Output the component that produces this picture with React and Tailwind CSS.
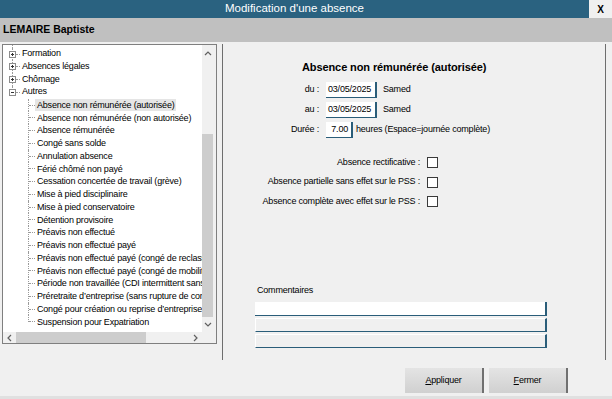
import React from 'react'

const TOP_ITEMS = [
  { label: 'Formation', open: false },
  { label: 'Absences légales', open: false },
  { label: 'Chômage', open: false },
  { label: 'Autres', open: true },
]

const CHILDREN = [
  'Absence non rémunérée (autorisée)',
  'Absence non rémunérée (non autorisée)',
  'Absence rémunérée',
  'Congé sans solde',
  'Annulation absence',
  'Férié chômé non payé',
  'Cessation concertée de travail (grève)',
  'Mise à pied disciplinaire',
  'Mise à pied conservatoire',
  'Détention provisoire',
  'Préavis non effectué',
  'Préavis non effectué payé',
  'Préavis non effectué payé (congé de reclassement)',
  'Préavis non effectué payé (congé de mobilité)',
  'Période non travaillée (CDI intermittent sans période)',
  'Préretraite d’entreprise (sans rupture de contrat)',
  'Congé pour création ou reprise d’entreprise',
  'Suspension pour Expatriation',
]

function ExpandBox({ open }) {
  return (
    <svg width="7" height="7" className="absolute left-[6px] top-[3px]">
      <rect x="0.5" y="0.5" width="6" height="6" fill="#fff" stroke="#8c8c8c" />
      <line x1="2" y1="3.5" x2="5" y2="3.5" stroke="#333" />
      {!open && <line x1="3.5" y1="2" x2="3.5" y2="5" stroke="#333" />}
    </svg>
  )
}

function TopRow({ item, last }) {
  return (
    <div className="relative h-[12.75px] flex items-center pl-[19px] whitespace-nowrap">
      <div className={`absolute left-[9px] top-0 border-l border-dotted border-[#9a9a9a] ${last ? 'h-1/2' : 'h-full'}`} />
      <div className="absolute left-[13px] top-[6px] w-[4px] border-t border-dotted border-[#9a9a9a]" />
      <ExpandBox open={item.open} />
      <span>{item.label}</span>
    </div>
  )
}

function ChildRow({ label, last, selected }) {
  return (
    <div className="relative h-[12.75px] flex items-center pl-[32px] whitespace-nowrap">
      <div className={`absolute left-[25px] top-0 border-l border-dotted border-[#9a9a9a] ${last ? 'h-1/2' : 'h-full'}`} />
      <div className="absolute left-[26px] top-[6px] w-[6px] border-t border-dotted border-[#9a9a9a]" />
      <span className={`px-[2px] leading-[12px] ${selected ? 'bg-[#e5e5e5]' : ''}`}>{label}</span>
    </div>
  )
}

function Chevron({ dir }) {
  const pts = {
    up: '1,5 4,2 7,5',
    down: '1,2 4,5 7,2',
    left: '5,1 2,4 5,7',
    right: '2,1 5,4 2,7',
  }
  return (
    <svg width="8" height="8">
      <polyline points={pts[dir]} fill="none" stroke="#606060" strokeWidth="1.2" />
    </svg>
  )
}

function TreePanel() {
  return (
    <div className="w-[215px] h-[300px] border border-[#7f7f7f] bg-white flex flex-col shrink-0">
      <div className="flex-1 flex min-h-0">
        <div className="flex-1 overflow-hidden pt-[2.6px] relative">
          <div className="absolute left-[9px] top-0 h-[3px] border-l border-dotted border-[#9a9a9a]" />
          {TOP_ITEMS.map((item, i) => (
            <TopRow key={item.label} item={item} last={i === TOP_ITEMS.length - 1} />
          ))}
          {CHILDREN.map((c, i) => (
            <ChildRow key={c} label={c} selected={i === 0} last={i === CHILDREN.length - 1} />
          ))}
        </div>
        <div className="w-[14px] bg-[#f0f0f0] flex flex-col">
          <div className="h-[17px] flex items-center justify-center pr-[2px]">
            <Chevron dir="up" />
          </div>
          <div className="h-[72px]" />
          <div className="h-[183px] w-[11px] bg-[#cdcdcd]" />
          <div className="flex-1 flex items-center justify-center pr-[2px]">
            <Chevron dir="down" />
          </div>
        </div>
      </div>
      <div className="h-[11px] flex bg-[#f0f0f0]">
        <div className="w-[13px] flex items-center justify-center">
          <Chevron dir="left" />
        </div>
        <div className="w-[130px] bg-[#cdcdcd]" />
        <div className="flex-1" />
        <div className="w-[13px] flex items-center justify-center">
          <Chevron dir="right" />
        </div>
        <div className="w-[14px] bg-[#f0f0f0]" />
      </div>
    </div>
  )
}

function Field({ value, w, right }) {
  return (
    <div
      className={`h-[16px] ${w} bg-white border-b border-r-2 border-[#2a5d79] flex items-center ${right ? 'justify-end pr-[3px]' : 'pl-[2px]'}`}
    >
      {value}
    </div>
  )
}

function CheckRow({ label }) {
  return (
    <div className="flex items-center h-[11px]">
      <div className="w-[197px] text-right">{label}</div>
      <div className="ml-[7px] w-[11px] h-[11px] border border-[#3a3a3a] bg-white" />
    </div>
  )
}

function DetailPanel() {
  return (
    <div className="w-[384px] h-[316px] border-l border-r border-[#6e6e6e] flex flex-col shrink-0">
      <div className="ml-[79px] mt-[16px] text-[11px] font-bold tracking-[-0.1px] leading-[14px]">
        Absence non rémunérée (autorisée)
      </div>

      <div className="mt-[8px] flex flex-col gap-[4px]">
        <div className="flex items-center">
          <div className="ml-[39px] w-[57px] text-right">du :</div>
          <div className="ml-[7px]"><Field value="03/05/2025" w="w-[51px]" /></div>
          <div className="ml-[6px]">Samed</div>
        </div>
        <div className="flex items-center">
          <div className="ml-[39px] w-[57px] text-right">au :</div>
          <div className="ml-[7px]"><Field value="03/05/2025" w="w-[51px]" /></div>
          <div className="ml-[6px]">Samed</div>
        </div>
        <div className="flex items-center">
          <div className="ml-[39px] w-[57px] text-right">Durée :</div>
          <div className="ml-[7px]"><Field value="7.00" w="w-[27px]" right /></div>
          <div className="ml-[3px]">heures (Espace=journée complète)</div>
        </div>
      </div>

      <div className="mt-[19px] flex flex-col gap-[8.5px]">
        <CheckRow label="Absence rectificative :" />
        <CheckRow label="Absence partielle sans effet sur le PSS :" />
        <CheckRow label="Absence complète avec effet sur le PSS :" />
      </div>

      <div className="mt-[77px] ml-[34px] leading-[12px]">Commentaires</div>
      <div className="mt-[6px] ml-[32px] flex flex-col gap-[2px]">
        <div className="w-[292px] h-[14px] bg-white border-b border-r-2 border-[#2a5d79]" />
        <div className="w-[292px] h-[14px] bg-[#f0f0f0] border-t border-l border-t-white border-l-white border-b border-r-2 border-b-[#2a5d79] border-r-[#2a5d79]" />
        <div className="w-[292px] h-[14px] bg-[#f0f0f0] border-t border-l border-t-white border-l-white border-b border-r-2 border-b-[#2a5d79] border-r-[#2a5d79]" />
      </div>
    </div>
  )
}

function Button({ hotkey, rest }) {
  return (
    <button className="w-[79px] h-[25px] bg-gradient-to-b from-[#e4e4e4] to-[#d0d0d0] border-r-2 border-[#707070] flex items-center justify-center text-black">
      <span className="underline">{hotkey}</span>
      {rest}
    </button>
  )
}

export default function App() {
  return (
    <div className="w-[612px] h-[399px] bg-[#f0f0f0] flex flex-col overflow-hidden font-['Liberation_Sans',Arial,sans-serif] text-[9px] tracking-[-0.2px] text-black">
      {/* Title bar */}
      <div className="h-[18px] flex bg-[#2a6280] shrink-0">
        <div className="flex-1 flex items-center justify-center text-white text-[11.5px] tracking-normal">
          Modification d'une absence
        </div>
        <div className="w-[23px] bg-[#f0f0f0] flex items-center justify-center font-bold text-[10px]">
          X
        </div>
      </div>

      {/* Employee */}
      <div className="h-[24px] bg-[#c0c0c0] flex items-center pl-[3px] font-bold text-[10.5px] tracking-normal shrink-0">
        LEMAIRE Baptiste
      </div>

      {/* Body */}
      <div className="flex items-start gap-[5px] pl-[2px] pt-[2px]">
        <TreePanel />
        <DetailPanel />
      </div>

      <div className="flex justify-end gap-[5px] pr-[44px] mt-[8px]">
        <Button hotkey="A" rest="ppliquer" />
        <Button hotkey="F" rest="ermer" />
      </div>

      <div className="flex-1" />
      <div className="h-[3px] bg-[#e0e0e0]" />
    </div>
  )
}
